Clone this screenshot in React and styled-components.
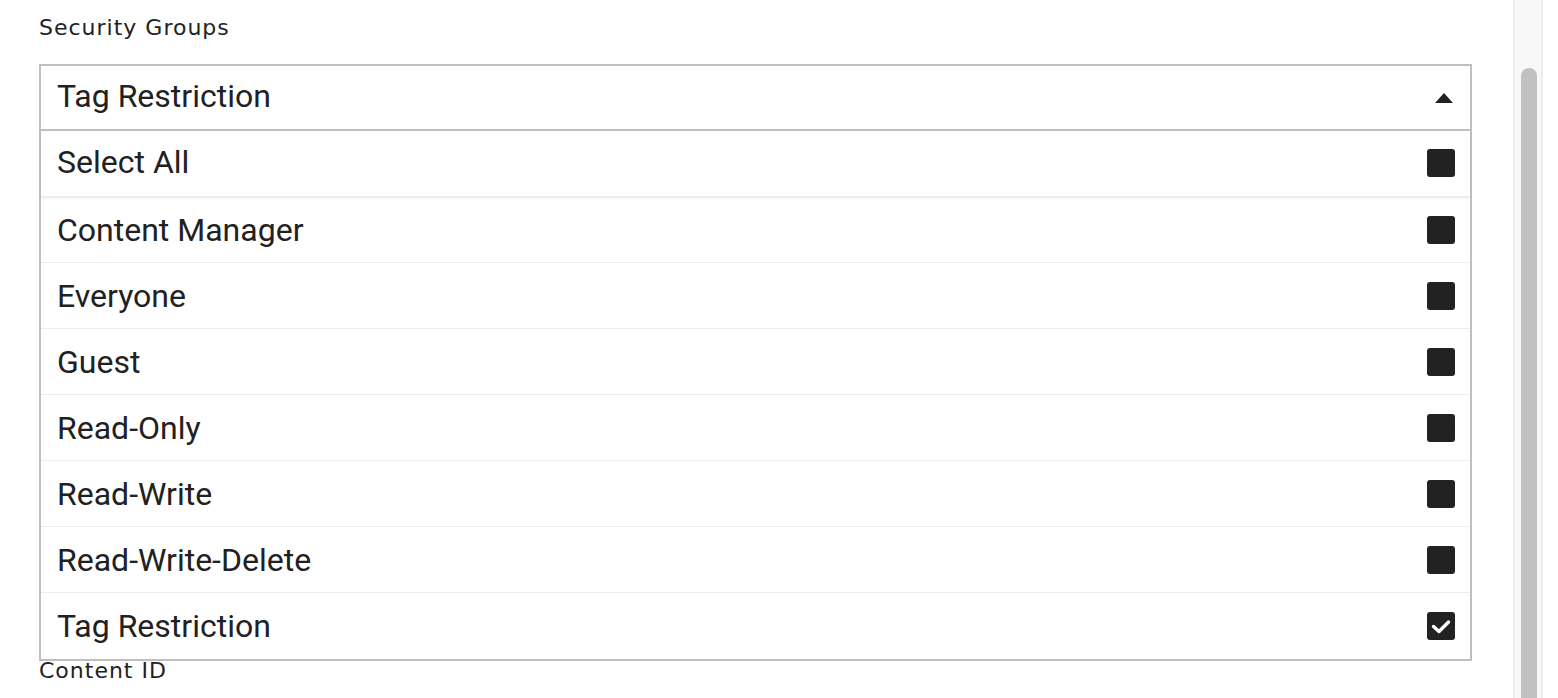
import React from 'react';
import styled, { createGlobalStyle } from 'styled-components';

const GlobalStyle = createGlobalStyle`
  html, body {
    margin: 0;
    padding: 0;
    background: #ffffff;
    overflow: hidden;
  }
`;

const Page = styled.div`
  height: 698px;
  width: 1558px;
  display: flex;
  background-color: white;
`;

const Main = styled.div`
  flex: 1;
  padding: 18px 41px 0 39px;
  display: flex;
  flex-direction: column;
`;

const FieldLabel = styled.div`
  font-family: 'DejaVu Sans', 'Open Sans', sans-serif;
  font-size: 22px;
  letter-spacing: 1px;
  line-height: 20px;
  color: #222;
  margin-bottom: ${(p) => p.gap || 0}px;
`;

// DROPDOWN //

const Dropdown = styled.div`
  border: 2px solid #bfbfbf;
  font-family: Roboto, 'Liberation Sans', sans-serif;
  color: #212121;
`;

const Header = styled.div`
  height: 63px;
  border-bottom: 2px solid #bfbfbf;
  display: flex;
  align-items: center;
  justify-content: space-between;
  padding: 0 16px 0 16px;
  font-size: 32px;

  span {
    margin-top: -3px;
  }
`;

const Caret = styled.div`
  width: 0;
  height: 0;
  border-left: 9px solid transparent;
  border-right: 9px solid transparent;
  border-bottom: 10px solid #222;
  margin-right: 1px;
`;

const Option = styled.div`
  height: ${(p) => (p.last ? '66px' : '65px')};
  display: flex;
  align-items: center;
  justify-content: space-between;
  padding: 0 15px 0 16px;
  font-size: 32px;
  border-bottom: ${(p) => (p.last ? 'none' : '1px solid #ededed')};
  box-shadow: ${(p) => (p.raised ? '0 1px 2px rgba(0, 0, 0, 0.1)' : 'none')};
  position: relative;

  span {
    margin-top: ${(p) => (p.raised ? '-3px' : '0')};
  }
`;

const Box = styled.div`
  width: 28px;
  height: 28px;
  border-radius: 3px;
  background-color: #222;
  display: flex;
  align-items: center;
  justify-content: center;
  margin-top: ${(p) => (p.raised ? '-2px' : '0')};
`;

// SCROLLBAR //

const Track = styled.div`
  width: 26px;
  margin-right: 15px;
  background-color: #f8f8f8;
  border-left: 2px solid #ededed;
  border-right: 2px solid #ededed;
  padding-top: 68px;
  display: flex;
  justify-content: center;
`;

const Thumb = styled.div`
  width: 16px;
  height: 100%;
  background-color: #c1c1c1;
  border-radius: 8px 8px 0 0;
  margin-left: 2px;
`;

const options = [
  { name: 'Select All', raised: true },
  { name: 'Content Manager' },
  { name: 'Everyone' },
  { name: 'Guest' },
  { name: 'Read-Only' },
  { name: 'Read-Write' },
  { name: 'Read-Write-Delete' },
  { name: 'Tag Restriction', checked: true, last: true },
];

const Check = () => (
  <svg width="22" height="18" viewBox="0 0 22 18">
    <path
      d="M3.5 9.5 L9 14.5 L18.5 5"
      fill="none"
      stroke="#fff"
      strokeWidth="3.4"
      strokeLinecap="round"
      strokeLinejoin="round"
    />
  </svg>
);

const App = () => {
  return (
    <>
      <GlobalStyle />
      <Page>
        <Main>
          <FieldLabel gap={26}>Security Groups</FieldLabel>
          <Dropdown>
            <Header>
              <span>Tag Restriction</span>
              <Caret />
            </Header>
            {options.map((o) => (
              <Option key={o.name} raised={o.raised} last={o.last}>
                <span>{o.name}</span>
                <Box raised={o.raised}>{o.checked && <Check />}</Box>
              </Option>
            ))}
          </Dropdown>
          <FieldLabel>Content ID</FieldLabel>
        </Main>
        <Track>
          <Thumb />
        </Track>
      </Page>
    </>
  );
};

export default App;
